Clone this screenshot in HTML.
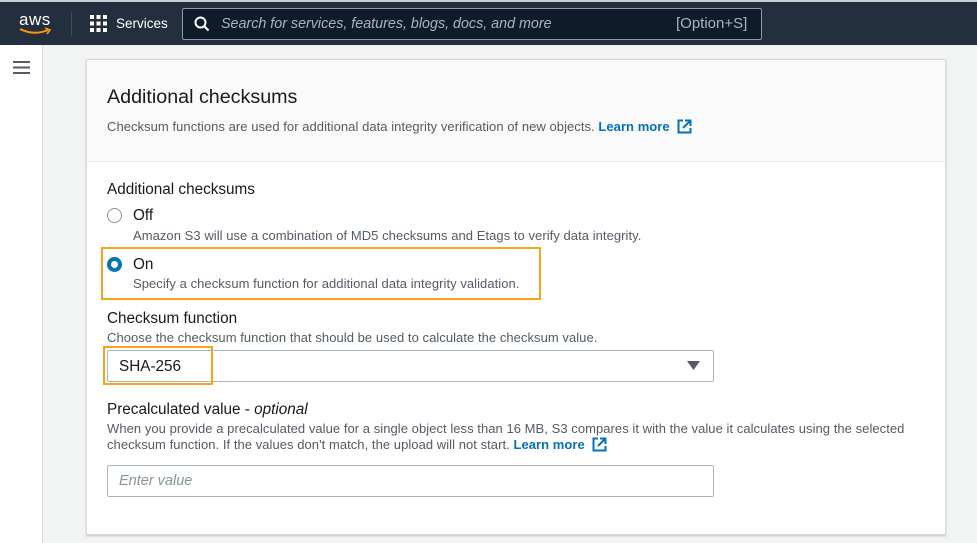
<!DOCTYPE html>
<html><head><meta charset="utf-8"><style>
*{box-sizing:border-box;margin:0;padding:0}
body{width:977px;height:543px;overflow:hidden;background:#f2f3f3;font-family:"Liberation Sans",sans-serif;color:#16191f;position:relative}
.a{position:absolute;white-space:nowrap}
.nav{left:0;top:0;width:977px;height:45px;background:#232f3e;border-top:2px solid #c9ccd0}
.side{left:0;top:45px;width:43px;height:498px;background:#fff;border-right:1px solid #d5dbdb}
.card{left:86px;top:59px;width:860px;height:476px;background:#fff;border:1px solid #d9dcdd;box-shadow:0 1px 2px rgba(0,0,0,.2)}
.hd{left:87px;top:60px;width:858px;height:102px;background:#fafafa;border-bottom:1px solid #eaeded}
.s{font-size:13px;letter-spacing:.05px;color:#545b64}
.l{font-size:15.3px;color:#16191f}
.lm{color:#0073bb;font-weight:bold}
.box{border:1px solid #aab7b8;border-radius:2px;background:#fff}
.or{border:2px solid #f8a31c}
.ic{display:inline-block;vertical-align:-3px;margin-left:7px}
</style></head><body>
<div class="a nav"></div>
<div class="a" style="left:19px;top:10px;color:#fff;font-size:17px;letter-spacing:.5px">aws</div>
<svg class="a" style="left:18px;top:27px" width="36" height="8"><path d="M2 2 Q16 9 30 3" stroke="#f90" stroke-width="2" fill="none"/><path d="M27 1 L32 3 L29 7" stroke="#f90" stroke-width="1.6" fill="none"/></svg>
<div class="a" style="left:71px;top:12px;width:1px;height:24px;background:#414d5c"></div>
<svg class="a" style="left:90px;top:15px" width="18" height="18" fill="#fff"><rect x="0" y="0" width="4" height="4"/><rect x="6.5" y="0" width="4" height="4"/><rect x="13" y="0" width="4" height="4"/><rect x="0" y="6.5" width="4" height="4"/><rect x="6.5" y="6.5" width="4" height="4"/><rect x="13" y="6.5" width="4" height="4"/><rect x="0" y="13" width="4" height="4"/><rect x="6.5" y="13" width="4" height="4"/><rect x="13" y="13" width="4" height="4"/></svg>
<div class="a" style="left:116px;top:16px;color:#fff;font-size:13.5px">Services</div>
<div class="a" style="left:182px;top:8px;width:580px;height:32px;background:#0f1b2a;border:1px solid #8d99a8;border-radius:2px"></div>
<svg class="a" style="left:194px;top:16px" width="16" height="16"><circle cx="6.5" cy="6.5" r="5" stroke="#fff" stroke-width="2" fill="none"/><path d="M10 10 L14.5 14.5" stroke="#fff" stroke-width="2"/></svg>
<div class="a" style="left:221px;top:16px;color:#aab4be;font-size:14.3px;font-style:italic">Search for services, features, blogs, docs, and more</div>
<div class="a" style="left:676px;top:15px;color:#aab4be;font-size:15px">[Option+S]</div>
<div class="a side"></div>
<svg class="a" style="left:13px;top:61px" width="17" height="13"><path d="M0 1H17M0 6.5H17M0 12H17" stroke="#545b64" stroke-width="2"/></svg>
<div class="a card"></div>
<div class="a hd"></div>
<div class="a" style="left:107px;top:86px;font-size:19.7px">Additional checksums</div>
<div class="a s" style="left:107px;top:119px">Checksum functions are used for additional data integrity verification of new objects. <span class="lm">Learn more</span><svg class="ic" width="15" height="15"><path d="M6 1.5H1.5V13.5H13.5V9" stroke="#0073bb" stroke-width="2" fill="none"/><path d="M8 1.5H13.5V7M13.5 1.5L6 9" stroke="#0073bb" stroke-width="2" fill="none"/></svg></div>
<div class="a l" style="left:107px;top:181px">Additional checksums</div>
<div class="a" style="left:107px;top:208px;width:15px;height:15px;border:1.5px solid #879596;border-radius:50%"></div>
<div class="a l" style="left:133px;top:207px">Off</div>
<div class="a s" style="left:133px;top:228px">Amazon S3 will use a combination of MD5 checksums and Etags to verify data integrity.</div>
<div class="a or" style="left:101px;top:247px;width:440px;height:53px"></div>
<div class="a" style="left:107px;top:257px;width:15px;height:15px;border:4.5px solid #0073bb;border-radius:50%;background:#fff"></div>
<div class="a l" style="left:133px;top:256px">On</div>
<div class="a s" style="left:133px;top:276px">Specify a checksum function for additional data integrity validation.</div>
<div class="a l" style="left:107px;top:310px">Checksum function</div>
<div class="a s" style="left:107px;top:330px">Choose the checksum function that should be used to calculate the checksum value.</div>
<div class="a box" style="left:107px;top:350px;width:607px;height:32px"></div>
<div class="a or" style="left:103px;top:346px;width:110px;height:39px"></div>
<div class="a l" style="left:119px;top:358px">SHA-256</div>
<svg class="a" style="left:687px;top:361px" width="13" height="9"><path d="M0 0H13L6.5 9Z" fill="#545b64"/></svg>
<div class="a l" style="left:107px;top:401px">Precalculated value - <i>optional</i></div>
<div class="a s" style="left:107px;top:421px">When you provide a precalculated value for a single object less than 16 MB, S3 compares it with the value it calculates using the selected</div>
<div class="a s" style="left:107px;top:437px">checksum function. If the values don't match, the upload will not start. <span class="lm">Learn more</span><svg class="ic" width="15" height="15"><path d="M6 1.5H1.5V13.5H13.5V9" stroke="#0073bb" stroke-width="2" fill="none"/><path d="M8 1.5H13.5V7M13.5 1.5L6 9" stroke="#0073bb" stroke-width="2" fill="none"/></svg></div>
<div class="a box" style="left:107px;top:465px;width:607px;height:32px"></div>
<div class="a" style="left:119px;top:473px;font-size:14.5px;font-style:italic;color:#879596">Enter value</div>
</body></html>
